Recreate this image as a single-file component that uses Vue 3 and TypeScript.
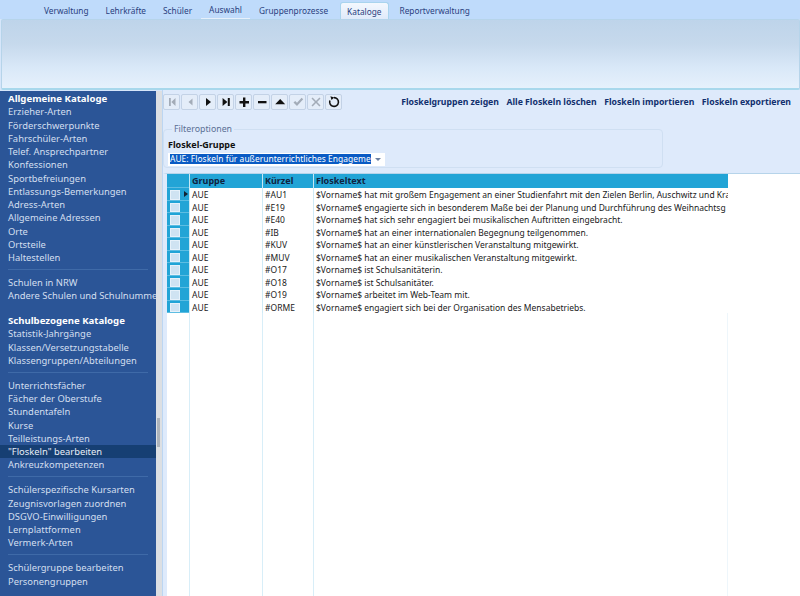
<script setup lang="ts">
const tabs = [
  { label: 'Verwaltung' },
  { label: 'Lehrkräfte' },
  { label: 'Schüler' },
  { label: 'Auswahl', hover: true },
  { label: 'Gruppenprozesse' },
  { label: 'Kataloge', active: true },
  { label: 'Reportverwaltung' },
]
type Item = { t: string; bold?: boolean; sel?: boolean } | { sep: true } | { gap: true }
const nav: Item[] = [
  { t: 'Allgemeine Kataloge', bold: true },
  { t: 'Erzieher-Arten' }, { t: 'Förderschwerpunkte' }, { t: 'Fahrschüler-Arten' },
  { t: 'Telef. Ansprechpartner' }, { t: 'Konfessionen' }, { t: 'Sportbefreiungen' },
  { t: 'Entlassungs-Bemerkungen' }, { t: 'Adress-Arten' }, { t: 'Allgemeine Adressen' },
  { t: 'Orte' }, { t: 'Ortsteile' }, { t: 'Haltestellen' },
  { sep: true },
  { t: 'Schulen in NRW' }, { t: 'Andere Schulen und Schulnumme' },
  { gap: true },
  { t: 'Schulbezogene Kataloge', bold: true },
  { t: 'Statistik-Jahrgänge' }, { t: 'Klassen/Versetzungstabelle' }, { t: 'Klassengruppen/Abteilungen' },
  { sep: true },
  { t: 'Unterrichtsfächer' }, { t: 'Fächer der Oberstufe' }, { t: 'Stundentafeln' }, { t: 'Kurse' },
  { t: 'Teilleistungs-Arten' }, { t: '"Floskeln" bearbeiten', sel: true }, { t: 'Ankreuzkompetenzen' },
  { sep: true },
  { t: 'Schülerspezifische Kursarten' }, { t: 'Zeugnisvorlagen zuordnen' }, { t: 'DSGVO-Einwilligungen' },
  { t: 'Lernplattformen' }, { t: 'Vermerk-Arten' },
  { sep: true },
  { t: 'Schülergruppe bearbeiten' }, { t: 'Personengruppen' },
]
const tools = [
  { p: 'M4 3h1.8v8H4zM10.5 3v8L6.3 7z', off: true },
  { p: 'M9.5 3.5v7L5.5 7z', off: true },
  { p: 'M5 3v8l5-4z' },
  { p: 'M3.6 3v8l4.8-4zM8.8 3h2v8h-2z' },
  { p: 'M6 2.5h2.4V6H12v2.4H8.4V12H6V8.4H2.5V6H6z' },
  { p: 'M3 6h8.5v2.3H3z' },
  { p: 'M7.2 4l5 5.2H2.2z' },
  { p: 'M2.5 7.5l1.7-1.6L6 7.8l4.6-5 1.6 1.5L6 11z', off: true },
  { p: 'M3.6 2.5L7 5.9l3.4-3.4 1.1 1.1L8.1 7l3.4 3.4-1.1 1.1L7 8.1l-3.4 3.4-1.1-1.1L5.9 7 2.5 3.6z', off: true },
  { p: '', refresh: true },
]
const links = ['Floskelgruppen zeigen', 'Alle Floskeln löschen', 'Floskeln importieren', 'Floskeln exportieren']
const rows = [
  ['#AU1', '$Vorname$ hat mit großem Engagement an einer Studienfahrt mit den Zielen Berlin, Auschwitz und Kra'],
  ['#E19', '$Vorname$ engagierte sich in besonderem Maße bei der Planung und Durchführung des Weihnachtsg'],
  ['#E40', '$Vorname$ hat sich sehr engagiert bei musikalischen Auftritten eingebracht.'],
  ['#IB', '$Vorname$ hat an einer internationalen Begegnung teilgenommen.'],
  ['#KUV', '$Vorname$ hat an einer künstlerischen Veranstaltung mitgewirkt.'],
  ['#MUV', '$Vorname$ hat an einer musikalischen Veranstaltung mitgewirkt.'],
  ['#O17', '$Vorname$ ist Schulsanitäterin.'],
  ['#O18', '$Vorname$ ist Schulsanitäter.'],
  ['#O19', '$Vorname$ arbeitet im Web-Team mit.'],
  ['#ORME', '$Vorname$ engagiert sich bei der Organisation des Mensabetriebs.'],
]
</script>

<template>
  <div class="app">
    <header class="tabs">
      <div v-for="tab in tabs" :key="tab.label" class="tab" :class="{ active: tab.active, hover: tab.hover }">{{ tab.label }}</div>
    </header>
    <div class="ribbon"></div>
    <div class="body">
      <nav class="side">
        <template v-for="(item, i) in nav" :key="i">
          <div v-if="'sep' in item" class="sep"></div>
          <div v-else-if="'gap' in item" class="gap"></div>
          <div v-else class="item" :class="{ bold: item.bold, sel: item.sel }">{{ item.t }}</div>
        </template>
      </nav>
      <div class="split"><div class="thumb"></div></div>
      <main class="main">
        <div class="bar">
          <div class="tools">
            <button v-for="(b, i) in tools" :key="i" class="tool" :class="{ off: b.off }">
              <svg width="14" height="14" viewBox="0 0 14 14">
                <path v-if="b.p" :d="b.p" />
                <g v-else>
                  <path d="M7 2.6a4.4 4.4 0 1 1-4.1 2.9" fill="none" stroke="currentColor" stroke-width="1.6" />
                  <path d="M3.4 1.2l3.9 1.3-2.8 2.6z" />
                </g>
              </svg>
            </button>
          </div>
          <div class="links">
            <span v-for="l in links" :key="l">{{ l }}</span>
          </div>
        </div>
        <fieldset class="filter">
          <legend>Filteroptionen</legend>
          <label class="flabel">Floskel-Gruppe</label>
          <div class="combo">
            <span class="cval">AUE: Floskeln für außerunterrichtliches Engageme</span>
            <span class="caret"></span>
          </div>
        </fieldset>
        <div class="sheet">
          <div class="grid">
            <div class="row head">
              <div class="ind"></div>
              <div class="c1">Gruppe</div>
              <div class="c2">Kürzel</div>
              <div class="c3">Floskeltext</div>
            </div>
            <div v-for="(r, i) in rows" :key="r[0]" class="row">
              <div class="ind"><span class="box"></span><span v-if="i === 0" class="mark"></span></div>
              <div class="c1">AUE</div>
              <div class="c2">{{ r[0] }}</div>
              <div class="c3">{{ r[1] }}</div>
            </div>
            <div class="rest">
              <div class="ri"></div><div class="r1"></div><div class="r2"></div><div class="r3"></div>
            </div>
          </div>
        </div>
      </main>
    </div>
  </div>
</template>

<style>
html, body { margin: 0; padding: 0; overflow: hidden; }
</style>

<style scoped>
.app {
  width: 800px; height: 596px; display: flex; flex-direction: column; overflow: hidden;
  background: #d6e6fa; font-family: "Noto Sans", sans-serif; font-size: 8.7px; color: #1a1a1a;
}
.tabs {
  height: 19px; flex: none; display: flex; padding-left: 35.5px; background: #bfdbfb;
  font-size: 8.3px; color: #2a3f7e;
}
.tab { height: 19px; padding: 1px 8.5px 0; display: flex; align-items: center; box-sizing: border-box; white-space: nowrap; }
.tab.hover { border-bottom: 1px solid #e6f0fb; }
.tab.active {
  background: linear-gradient(#f4f8fe, #dfeafa); border: 1px solid #a9d4ee; border-bottom: 0; border-radius: 3px 3px 0 0;
  margin: 2px 2px 0 3px; height: 17px; padding: 0 6.5px;
}
.ribbon {
  height: 71px; flex: none; box-sizing: border-box; margin-left: 1px;
  background: linear-gradient(#bed4ea 0%, #c6d9ec 35%, #d9e8f8 70%, #e6f1fc 100%);
  border: 1px solid #b6d4ea; border-bottom: 2px solid #a8d8ec; border-radius: 2px;
}
.body { flex: 1; display: flex; min-height: 0; }
.side {
  width: 156px; padding-top: 1px; margin-top: 1px; overflow: hidden; flex: none; box-sizing: border-box;
  background: #2b5597; color: #d3dfef;
}
.item { height: 13.25px; line-height: 13px; padding-left: 8px; white-space: nowrap; overflow: hidden; font-size: 9.4px; }
.item.bold { font-weight: 700; color: #fff; font-size: 9.6px; }
.item.sel { background: #163f73; color: #e8eef7; }
.sep { height: 1px; margin: 4.4px 8px 6.35px; background: #3f6aa8; }
.gap { height: 11.75px; }
.split { width: 6px; flex: none; background: #dcdfe3; position: relative; margin-top: 1px; }
.thumb { position: absolute; left: 1px; top: 327px; width: 3px; height: 29px; background: #adb3bb; }
.main {
  flex: 1; min-width: 0; display: flex; flex-direction: column; background: #deeafb;
  border-left: 1px solid #bcd6f2;
}
.bar { height: 33.5px; display: flex; justify-content: space-between; padding: 4px 9px 0 0; box-sizing: border-box; flex: none; }
.tools { display: flex; gap: 1px; height: 16px; }
.tool {
  width: 17px; height: 16px; padding: 0; margin: 0; box-sizing: border-box; display: flex; align-items: center; justify-content: center;
  background: #e4edf9; border: 1px solid #c3d2e6; border-radius: 2px; color: #111;
}
.tool svg { fill: currentColor; }
.tool.off { color: #a3acb8; }
.links { display: flex; gap: 7.5px; font-weight: 700; color: #12306e; font-size: 8.7px; line-height: 16px; white-space: nowrap; }
.filter {
  margin: 0; padding: 0 4px; width: 500px; height: 44.5px; box-sizing: border-box; border: 1px solid #cfdff2; border-radius: 4px;
  flex: none; background: #deeafb;
}
.filter legend { padding: 0 2px; margin-left: 4px; color: #5a6f94; font-size: 8.8px; line-height: 11px; }
.flabel { display: block; font-weight: 700; color: #111; font-size: 9px; line-height: 12px; margin-top: 4px; }
.combo {
  width: 217px; height: 13px; margin-top: 2px; background: #fff; display: flex; align-items: center; padding-left: 2px; box-sizing: border-box; justify-content: space-between;
}
.cval { background: #0a5bc4; color: #fff; white-space: nowrap; line-height: 10px; font-size: 8.4px; letter-spacing: 0.06px; }
.caret { width: 0; height: 0; border: 3px solid transparent; border-top: 3px solid #6a7fa0; border-bottom: 0; margin-right: 4px; }
.sheet { flex: 1; min-height: 0; margin-top: 5px; border-top: 1px solid #b6d4ea; border-left: 4px solid #deeafb; background: #fff; }
.grid { width: 561px; height: 100%; display: flex; flex-direction: column; overflow: hidden; background: #fff; }
.row { display: flex; height: 12.5px; line-height: 12px; flex: none; background: #fff; font-size: 8.5px; }
.row.head { height: 14px; line-height: 13px; font-weight: 700; font-size: 9px; color: #10233f; background: #22a4d6; }
.ind { width: 22px; flex: none; background: #22a4d6; position: relative; border-bottom: 1px solid #5dbde2; box-sizing: border-box; }
.box { position: absolute; left: 3px; top: 2px; width: 10px; height: 9.5px; background: #cfe3f2; border: 1px solid #e6f1fa; box-sizing: border-box; }
.mark { position: absolute; left: 16.5px; top: 3px; width: 0; height: 0; border: 3px solid transparent; border-left: 4px solid #123; border-right: 0; }
.c1, .c2, .c3 { box-sizing: border-box; padding: 1px 0 0 2px; white-space: nowrap; overflow: hidden; border-left: 1px solid #cfeaf6; }
.c1 { width: 73px; flex: none; }
.c2 { width: 51px; flex: none; }
.c3 { flex: 1; }
.head .c1, .head .c2, .head .c3 { border-left: 1px solid #c6e8f5; padding-top: 0; }
.rest { flex: 1; display: flex; }
.ri { width: 22px; box-sizing: border-box; }
.r1 { width: 73px; border-left: 1px solid #d8eef8; box-sizing: border-box; }
.r2 { width: 51px; border-left: 1px solid #d8eef8; box-sizing: border-box; }
.r3 { flex: 1; border-left: 1px solid #d8eef8; border-right: 1px solid #eef6fb; }
</style>
